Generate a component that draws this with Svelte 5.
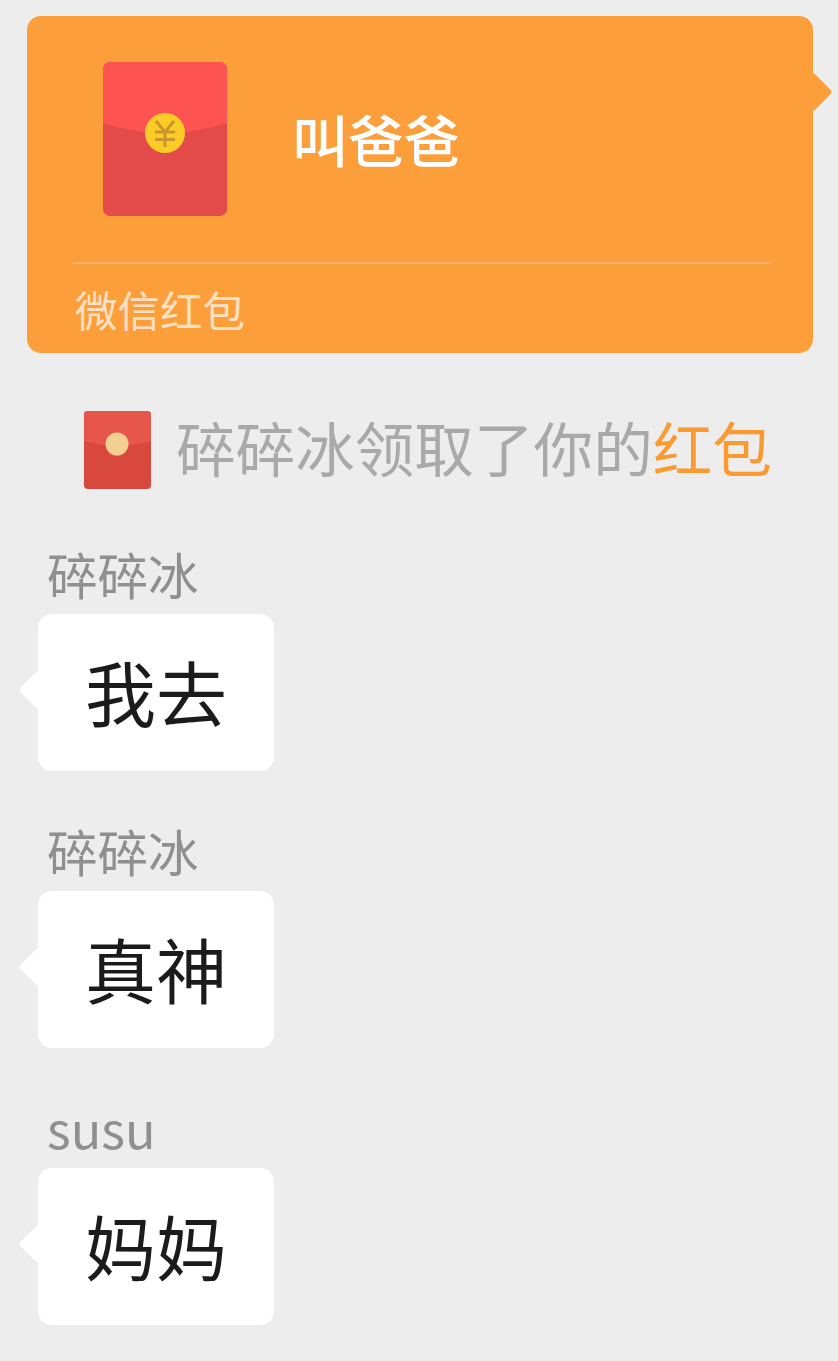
<script>
    const messages = [
        { name: '碎碎冰', text: '我去' },
        { name: '碎碎冰', text: '真神' },
        { name: 'susu', text: '妈妈' }
    ];
</script>

<style>
    :global(body) {
        background: #ededed;
    }

    .page {
        width: 838px;
        height: 1361px;
        box-sizing: border-box;
        padding-top: 16px;
        overflow: hidden;
        background: #ededed;
        font-family: "Noto Sans CJK SC", "Noto Sans", sans-serif;
    }

    .card {
        position: relative;
        box-sizing: border-box;
        width: 786px;
        height: 337px;
        margin-left: 27px;
        padding: 46px 42px 0 46px;
        background: #fc9f3b;
        border-radius: 14px;
    }

    .card::after {
        content: '';
        position: absolute;
        right: -14px;
        top: 62px;
        width: 28px;
        height: 28px;
        background: #fc9f3b;
        border-radius: 4px;
        transform: rotate(45deg);
    }

    .card-top {
        display: flex;
        align-items: center;
        gap: 65px;
        padding-left: 30px;
        height: 154px;
    }

    .packet {
        display: block;
        width: 124px;
        height: 154px;
    }

    .title {
        color: #fff;
        font-size: 56px;
        font-weight: 500;
        line-height: 1;
        margin-top: -2px;
    }

    .divider {
        height: 2px;
        margin-top: 46px;
        background: #fdb469;
    }

    .card-foot {
        color: #fee0c4;
        font-size: 42.5px;
        line-height: 48px;
        margin-top: 21px;
        padding-left: 2px;
    }

    .notice {
        display: flex;
        align-items: center;
        gap: 25px;
        margin: 58px 0 0 84px;
        height: 78px;
    }

    .mini {
        display: block;
        width: 67px;
        height: 78px;
    }

    .notice-text {
        color: #a9a9a9;
        font-size: 59.6px;
        line-height: 78px;
        padding-bottom: 8px;
        white-space: nowrap;
    }

    .notice-text span {
        color: #fb9a30;
    }

    .list {
        display: flex;
        flex-direction: column;
        gap: 50px;
        margin-top: 55px;
        padding-left: 38px;
    }

    .name {
        color: #8f8f8f;
        font-size: 50.5px;
        line-height: 58px;
        padding-left: 9px;
        margin-bottom: 12px;
    }

    .bubble {
        position: relative;
        box-sizing: border-box;
        display: flex;
        align-items: center;
        justify-content: center;
        width: 236px;
        height: 157px;
        padding-bottom: 4px;
        background: #fff;
        border-radius: 14px;
        color: #1b1b1b;
        font-size: 71px;
        line-height: 1;
    }

    .bubble::before {
        content: '';
        position: absolute;
        left: -14px;
        top: 62px;
        width: 28px;
        height: 28px;
        background: #fff;
        border-radius: 4px;
        transform: rotate(45deg);
    }

    .bubble span {
        position: relative;
    }
</style>

<div class="page">
    <div class="card">
        <div class="card-top">
            <svg class="packet" viewBox="0 0 124 154">
                <rect width="124" height="154" rx="7" fill="#e24b49" />
                <path d="M0 61 V7 a7 7 0 0 1 7 -7 H117 a7 7 0 0 1 7 7 V61 Q62 81 0 61 Z" fill="#fd5452" />
                <circle cx="62" cy="71" r="20" fill="#fdcb25" />
                <path d="M53 59 L62 70 L71 59 M62 70 V85 M52 70 H72 M52 77.5 H72" fill="none" stroke="#c9952c" stroke-width="3" />
            </svg>
            <div class="title">叫爸爸</div>
        </div>
        <div class="divider"></div>
        <div class="card-foot">微信红包</div>
    </div>

    <div class="notice">
        <svg class="mini" viewBox="0 0 67 78">
            <rect width="67" height="78" rx="4" fill="#d8483c" />
            <path d="M0 30 V4 a4 4 0 0 1 4 -4 H63 a4 4 0 0 1 4 4 V30 Q33 40 0 30 Z" fill="#e6564a" />
            <circle cx="33" cy="33" r="11.5" fill="#f3cf92" />
        </svg>
        <div class="notice-text">碎碎冰领取了你的<span>红包</span></div>
    </div>

    <div class="list">
        {#each messages as m}
            <div class="msg">
                <div class="name">{m.name}</div>
                <div class="bubble"><span>{m.text}</span></div>
            </div>
        {/each}
    </div>
</div>
